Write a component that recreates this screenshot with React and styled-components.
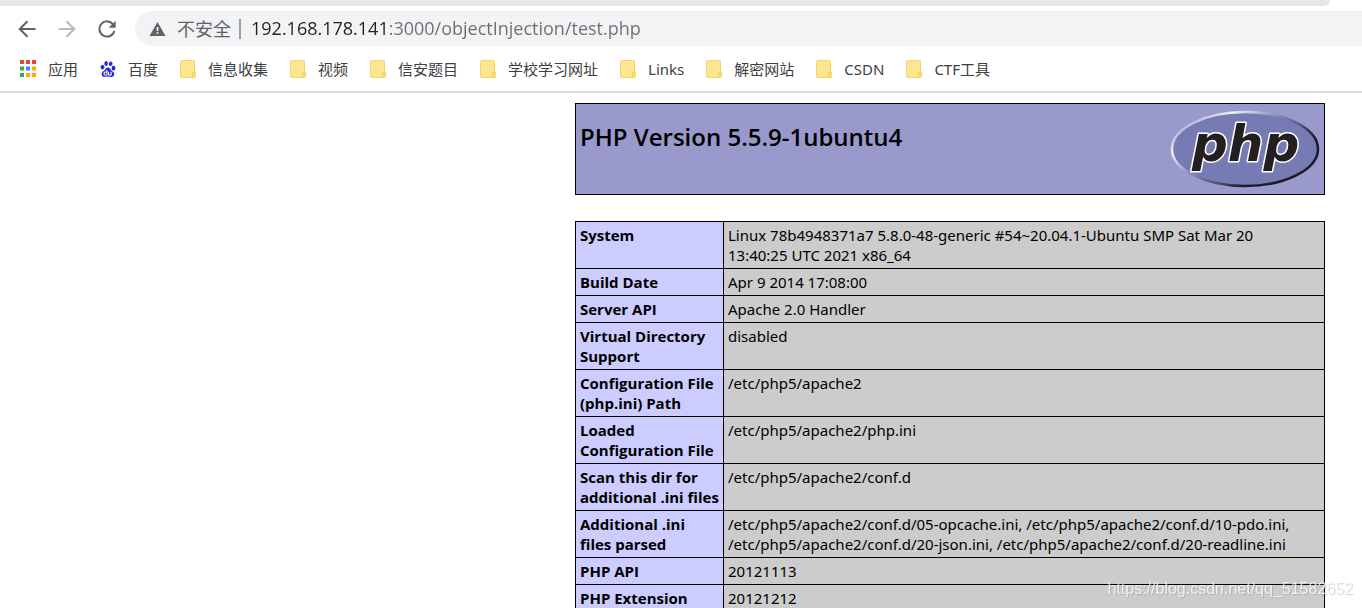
import React, { useState } from 'react';
import styled, { createGlobalStyle } from 'styled-components'
import { SiBaidu } from 'react-icons/si'

const uiFont = `'Open Sans', 'Noto Sans CJK SC', sans-serif`
const pageFont = `'Noto Sans', 'Noto Sans CJK SC', sans-serif`

const GlobalStyle = createGlobalStyle`
	* {
		box-sizing: border-box;
	}
	body {
		margin: 0;
		background: #fff;
		color: #000;
		font-family: ${pageFont};
	}
`

const Window = styled.div`
	display: flex;
	flex-direction: column;
	height: 100vh;
	overflow: hidden;
`

const Chrome = styled.header`
	flex: none;
	border-bottom: 2px solid #dadce0;
`

const TabStrip = styled.div`
	height: 6px;
	margin-right: 32px;
	background: #e4e8eb;
	border-bottom-right-radius: 6px;
`

const Toolbar = styled.nav`
	display: flex;
	align-items: center;
	gap: 16px;
	padding: 5px 0 0 15px;
`

const NavButton = styled.button`
	display: flex;
	align-items: center;
	justify-content: center;
	width: 24px;
	height: 24px;
	padding: 0;
	border: 0;
	background: none;
	color: ${p => p.disabled ? '#bababc' : '#5f6368'};
`

const Omnibox = styled.div`
	flex: 1;
	display: flex;
	align-items: center;
	height: 35px;
	padding-left: 14px;
	background: #f1f3f4;
	border-radius: 18px 0 0 18px;
`

const SiteInfo = styled.button`
	display: flex;
	align-items: center;
	gap: 11px;
	padding: 0 8px 0 0;
	border: 0;
	border-right: 2px solid #9aa0a6;
	background: none;
	color: #5f6368;
	font: 18px/20px ${uiFont};
	white-space: nowrap;
`

// the host part is darker than the rest of the address
const Address = styled.input`
	flex: 1;
	min-width: 0;
	height: 34px;
	margin-bottom: 1px;
	padding: 0 0 0 10px;
	border: 0;
	outline: none;
	color: #5f6368;
	font: 18px/24px ${uiFont};
	background: linear-gradient(to right, #202124 146px, #6b6e72 146px);
	background-clip: text;
	-webkit-background-clip: text;
	-webkit-text-fill-color: transparent;
`

const BookmarkBar = styled.nav`
	display: flex;
	align-items: center;
	gap: 22px;
	height: 45px;
	padding-left: 20px;
`

const BookmarkLink = styled.a`
	display: flex;
	align-items: center;
	gap: 12px;
	color: #3c4043;
	font-size: 15px;
	line-height: 20px;
	text-decoration: none;
	white-space: nowrap;

	svg {
		flex: none;
		overflow: visible;
	}
`

const Page = styled.main`
	display: flex;
	flex-direction: column;
	align-items: flex-end;
	gap: 26px;
	padding: 10px 37px 0;
`

const Banner = styled.div`
	display: flex;
	justify-content: space-between;
	align-items: flex-start;
	width: 750px;
	max-width: 100%;
	padding: 3px 4px;
	border: 1px solid #000;
	background: #9999cc;
`

const Title = styled.h1`
	margin: 14px 0 0;
	font-family: ${uiFont};
	font-size: 24px;
	font-weight: 600;
	line-height: 32px;
`

const InfoTable = styled.table`
	width: 750px;
	max-width: 100%;
	border-collapse: collapse;
	table-layout: fixed;
	font-size: 15px;
	line-height: 20px;

	th, td {
		padding: 3px 4px;
		border: 1px solid #000;
		text-align: left;
		vertical-align: top;
	}
`

const KeyCell = styled.th`
	width: 148px;
	background: #ccccff;
	font-weight: 700;
	font-family: ${uiFont};
	white-space: pre;
`

const ValueCell = styled.td`
	background: #cccccc;
	white-space: pre-line;
`

const Watermark = styled.div`
	position: fixed;
	right: 9px;
	bottom: 9px;
	color: rgba(255, 255, 255, 0.75);
	font: 16px/20px 'Liberation Sans', sans-serif;
	text-shadow: 1px 1px 1px rgba(120, 120, 120, 0.35);
	pointer-events: none;
`

const BackIcon = () => (
	<svg width="18" height="18" viewBox="0 0 18 18" fill="none" stroke="currentColor" strokeWidth="2">
		<path d="M17.500 9H2M9.500 1.200L1.700 9l7.800 7.800"/>
	</svg>
)

const ForwardIcon = () => (
	<svg width="18" height="18" viewBox="0 0 18 18" fill="none" stroke="currentColor" strokeWidth="2">
		<path d="M.5 9H16M8.500 1.200L16.300 9l-7.800 7.800"/>
	</svg>
)

const ReloadIcon = () => (
	<svg width="18" height="18" viewBox="0 0 18 18" fill="none">
		<path d="M15.300 4.600A7.600 7.600 0 1 0 16.400 11" stroke="currentColor" strokeWidth="2"/>
		<path d="M17.600.8v7h-7z" fill="currentColor"/>
	</svg>
)

const WarningIcon = () => (
	<svg width="17" height="16" viewBox="0 0 17 16">
		<path d="M8.500 1L16.500 15H.5z" fill="#5f6368"/>
		<path d="M7.700 6h1.600v4H7.700zM7.700 11.300h1.600v1.700H7.700z" fill="#f1f3f4"/>
	</svg>
)

const appColors = [
	'#ea4335', '#ea4335', '#ea4335',
	'#34a853', '#4285f4', '#fbaf05',
	'#34a853', '#fbaf05', '#fbaf05',
]

const AppsIcon = () => (
	<svg width="16" height="16" viewBox="0 0 16 16">
		{appColors.map((c, i) =>
			<rect key={i} x={(i % 3) * 6} y={Math.floor(i / 3) * 6.500 - 1} width="4" height="4" fill={c}/>
		)}
	</svg>
)

const FolderIcon = () => (
	<svg width="16" height="18" viewBox="0 0 16 18">
		<rect x=".5" y=".5" width="14" height="17" rx="1" fill="#ffe591" stroke="#f7d568"/>
		<path d="M12.500 17.500v-4.500q0-1 1.500-1t1.500 1v3.500q0 1-1 1z" fill="#ffe07a" stroke="#f5cf4a"/>
	</svg>
)

const PhpLogo = () => (
	<svg width="150" height="84" viewBox="0 0 150 84" role="img" aria-label="PHP logo">
		<defs>
			<linearGradient id="rim" x1="0.1" y1="0.1" x2="0.9" y2="0.7">
				<stop offset="0" stopColor="#a9aad4"/>
				<stop offset="0.2" stopColor="#eef0f8"/>
				<stop offset="0.45" stopColor="#8d8fc0"/>
				<stop offset="0.65" stopColor="#5a5c86"/>
				<stop offset="0.85" stopColor="#1d1b26"/>
				<stop offset="1" stopColor="#1d1b26"/>
			</linearGradient>
		</defs>
		<ellipse cx="75" cy="42" rx="73" ry="37" fill="#777bb3" stroke="url(#rim)" strokeWidth="2.500"/>
		<text
			x="22" y="54"
			fontFamily="DejaVu Sans" fontSize="50" fontWeight="bold" fontStyle="oblique"
			fill="#231f20" stroke="#fff" strokeWidth="3" strokeLinejoin="round" paintOrder="stroke"
		>php</text>
	</svg>
)

const bookmarks = [
	{name: '应用', icon: <AppsIcon/>},
	{name: '百度', icon: <SiBaidu size={16} color="#2529d8"/>},
	{name: '信息收集'},
	{name: '视频'},
	{name: '信安题目'},
	{name: '学校学习网址'},
	{name: 'Links'},
	{name: '解密网站'},
	{name: 'CSDN'},
	{name: 'CTF工具'},
]

const info = [
	['System', 'Linux 78b4948371a7 5.8.0-48-generic #54~20.04.1-Ubuntu SMP Sat Mar 20\n13:40:25 UTC 2021 x86_64'],
	['Build Date', 'Apr 9 2014 17:08:00'],
	['Server API', 'Apache 2.0 Handler'],
	['Virtual Directory\nSupport', 'disabled'],
	['Configuration File\n(php.ini) Path', '/etc/php5/apache2'],
	['Loaded\nConfiguration File', '/etc/php5/apache2/php.ini'],
	['Scan this dir for\nadditional .ini files', '/etc/php5/apache2/conf.d'],
	['Additional .ini\nfiles parsed', '/etc/php5/apache2/conf.d/05-opcache.ini, /etc/php5/apache2/conf.d/10-pdo.ini,\n/etc/php5/apache2/conf.d/20-json.ini, /etc/php5/apache2/conf.d/20-readline.ini'],
	['PHP API', '20121113'],
	['PHP Extension', '20121212'],
]

const App = () => {
	const [url, setUrl] = useState('192.168.178.141:3000/objectInjection/test.php')

	return (
		<Window>
			<GlobalStyle/>
			<Chrome>
				<TabStrip/>
				<Toolbar>
					<NavButton aria-label="Back"><BackIcon/></NavButton>
					<NavButton aria-label="Forward" disabled><ForwardIcon/></NavButton>
					<NavButton aria-label="Reload"><ReloadIcon/></NavButton>
					<Omnibox>
						<SiteInfo><WarningIcon/>不安全</SiteInfo>
						<Address aria-label="Address" spellCheck={false} value={url} onChange={(e) => setUrl(e.target.value)}/>
					</Omnibox>
				</Toolbar>
				<BookmarkBar>
					{bookmarks.map(b =>
						<BookmarkLink key={b.name} href="#">{b.icon || <FolderIcon/>}{b.name}</BookmarkLink>
					)}
				</BookmarkBar>
			</Chrome>
			<Page>
				<Banner>
					<Title>PHP Version 5.5.9-1ubuntu4</Title>
					<PhpLogo/>
				</Banner>
				<InfoTable>
					<tbody>
						{info.map(([key, value]) =>
							<tr key={key}>
								<KeyCell scope="row">{key}</KeyCell>
								<ValueCell>{value}</ValueCell>
							</tr>
						)}
					</tbody>
				</InfoTable>
			</Page>
			<Watermark>https://blog.csdn.net/qq_51582652</Watermark>
		</Window>
	);
}

export default App
